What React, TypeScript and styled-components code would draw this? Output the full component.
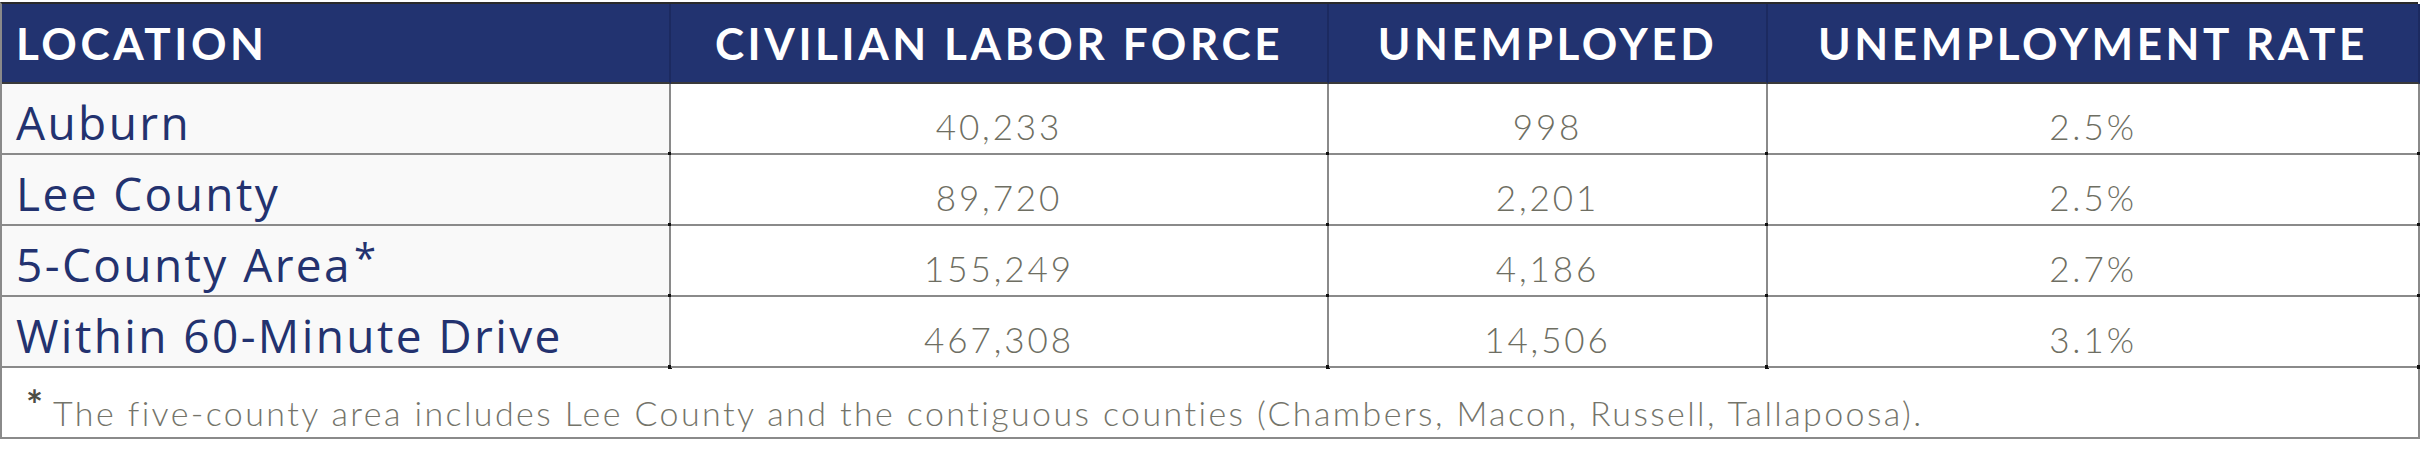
import React from 'react';
import styled, { createGlobalStyle } from 'styled-components';

const GlobalStyle = createGlobalStyle`
  html, body {
    margin: 0;
    padding: 0;
    background: #ffffff;
  }
  body {
    padding-top: 2px;
  }
`;

interface Row {
  location: string;
  starred?: boolean;
  labor: string;
  unemployed: string;
  rate: string;
}

const rows: Row[] = [
  { location: 'Auburn', labor: '40,233', unemployed: '998', rate: '2.5%' },
  { location: 'Lee County', labor: '89,720', unemployed: '2,201', rate: '2.5%' },
  { location: '5-County Area', starred: true, labor: '155,249', unemployed: '4,186', rate: '2.7%' },
  { location: 'Within 60-Minute Drive', labor: '467,308', unemployed: '14,506', rate: '3.1%' },
];

const Table = styled.div`
  width: 2418px;
  display: grid;
  grid-template-columns: 669px 658px 439px 652px;
  grid-template-rows: 80px repeat(4, 71px) 71px;
  border-top: 2px solid #2a2a2a;
  border-left: 2px solid #8a8a8a;
  box-sizing: border-box;
`;

const HeadCell = styled.div<{ align?: 'left' | 'center' }>`
  background: #223370;
  color: #ffffff;
  font-family: Lato, 'Liberation Sans', sans-serif;
  font-weight: 700;
  font-size: 44px;
  letter-spacing: 3.6px;
  display: flex;
  align-items: center;
  justify-content: ${(p) => (p.align === 'left' ? 'flex-start' : 'center')};
  padding: 0 14px;
  border-right: 2px solid #1c2a60;
  border-bottom: 2px solid #3a3a3a;
  box-sizing: border-box;
  white-space: nowrap;
`;

const Cell = styled.div<{ first?: boolean }>`
  position: relative;
  background: ${(p) => (p.first ? '#f9f9f9' : '#ffffff')};
  color: ${(p) => (p.first ? '#23326f' : '#6e6e62')};
  font-family: ${(p) => (p.first ? "'Open Sans', sans-serif" : "Lato, 'Open Sans', sans-serif")};
  font-weight: ${(p) => (p.first ? 400 : 300)};
  font-size: ${(p) => (p.first ? '46px' : '35px')};
  letter-spacing: ${(p) => (p.first ? '2.4px' : '2.9px')};
  display: flex;
  align-items: center;
  justify-content: ${(p) => (p.first ? 'flex-start' : 'center')};
  padding: ${(p) => (p.first ? '6px 14px 0' : '14px 0 0')};
  border-right: 2px solid #8a8a8a;
  border-bottom: 2px solid #8a8a8a;
  box-sizing: border-box;
  white-space: nowrap;

  &::after {
    content: '';
    position: absolute;
    right: -3px;
    bottom: -3px;
    width: 4px;
    height: 4px;
    background: #111111;
  }
`;

const Star = styled.span`
  margin-left: 2px;
  position: relative;
  top: -6px;
  font-size: 40px;
`;

const Footnote = styled.div`
  grid-column: 1 / -1;
  display: flex;
  align-items: center;
  padding: 20px 0 0 24px;
  border-right: 2px solid #8a8a8a;
  border-bottom: 2px solid #8a8a8a;
  font-family: Lato, 'Open Sans', sans-serif;
  font-weight: 300;
  font-size: 34px;
  letter-spacing: 2.4px;
  color: #74746a;
  box-sizing: border-box;
  white-space: nowrap;
`;

const FootStar = styled.span`
  color: #4e4e46;
  font-weight: 700;
  font-size: 40px;
  letter-spacing: 0;
  margin-right: 10px;
  position: relative;
  top: -8px;
`;

export default function App() {
  return (
    <>
      <GlobalStyle />
      <Table>
        <HeadCell align="left">LOCATION</HeadCell>
        <HeadCell>CIVILIAN LABOR FORCE</HeadCell>
        <HeadCell>UNEMPLOYED</HeadCell>
        <HeadCell>UNEMPLOYMENT RATE</HeadCell>
        {rows.map((r) => (
          <React.Fragment key={r.location}>
            <Cell first>
              {r.location}
              {r.starred && <Star>*</Star>}
            </Cell>
            <Cell>{r.labor}</Cell>
            <Cell>{r.unemployed}</Cell>
            <Cell>{r.rate}</Cell>
          </React.Fragment>
        ))}
        <Footnote>
          <FootStar>*</FootStar>
          The five-county area includes Lee County and the contiguous counties (Chambers, Macon, Russell, Tallapoosa).
        </Footnote>
      </Table>
    </>
  );
}
